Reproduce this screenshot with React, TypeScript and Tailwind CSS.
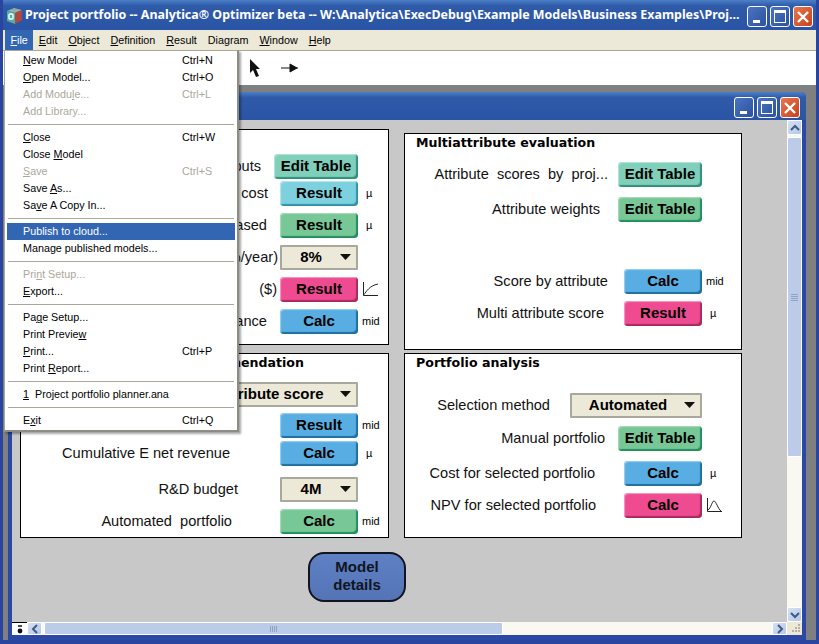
import React from 'react';

const menuItems = [
  ['&New Model', 'Ctrl+N'], ['&Open Model...', 'Ctrl+O'], ['Add Modu&le...', 'Ctrl+L', 'off'], ['Add Library...', '', 'off'], '-',
  ['&Close', 'Ctrl+W'], ['Close &Model', ''], ['&Save', 'Ctrl+S', 'off'], ['Save &As...', ''], ['Sa&ve A Copy In...', ''], '-',
  ['Publish to cloud...', '', 'on'], ['Manage published models...', ''], '-',
  ['Pri&nt Setup...', '', 'off'], ['&Export...', ''], '-',
  ['Pa&ge Setup...', ''], ['Print Previe&w', ''], ['&Print...', 'Ctrl+P'], ['Print &Report...', ''], '-',
  ['&1  Project portfolio planner.ana', ''], '-',
  ['E&xit', 'Ctrl+Q'],
] as const;

const topMenus = ['&File', '&Edit', '&Object', '&Definition', '&Result', 'Dia&gram', '&Window', '&Help'];

const btnColors = {
  teal: 'bg-[#7fcfba] shadow-[inset_1px_1px_1px_#b5e3d8,inset_-2px_-2px_1px_#2f8f7c]',
  cyan: 'bg-[#7dd1de] shadow-[inset_1px_1px_1px_#b8e6ee,inset_-2px_-2px_1px_#2d93a8]',
  green: 'bg-[#78c797] shadow-[inset_1px_1px_1px_#a9dcbc,inset_-2px_-2px_1px_#1f8f5c]',
  blue: 'bg-[#58aee3] shadow-[inset_1px_1px_1px_#9bd0f0,inset_-2px_-2px_1px_#1f6f9f]',
  pink: 'bg-[#ef4b90] shadow-[inset_1px_1px_1px_#f59cc0,inset_-2px_-2px_1px_#a82a60]',
};

// turns "&New" into an underlined mnemonic
const Mnemonic = ({ text }: { text: string }) => {
  const i = text.indexOf('&');
  if (i < 0) return <span className="whitespace-pre">{text}</span>;
  return (
    <span className="whitespace-pre">
      {text.slice(0, i)}<u>{text[i + 1]}</u>{text.slice(i + 2)}
    </span>
  );
};

const WinButtons = ({ className }: { className: string }) => (
  <div className={`flex gap-[3px] ${className}`}>
    <div className="w-[20px] h-[21px] rounded-[3px] border border-white bg-gradient-to-br from-[#4a74c0] to-[#2c52a0] relative">
      <div className="absolute left-[5px] bottom-[3px] w-[7px] h-[3px] bg-white" />
    </div>
    <div className="w-[20px] h-[21px] rounded-[3px] border border-white bg-gradient-to-br from-[#4a74c0] to-[#2c52a0] relative">
      <div className="absolute left-[3px] top-[3px] w-[12px] h-[13px] border border-white border-t-[3px]" />
    </div>
    <div className="w-[20px] h-[21px] rounded-[3px] border border-white bg-gradient-to-br from-[#e8764c] to-[#c8401c] flex items-center justify-center">
      <svg width="14" height="14" viewBox="0 0 14 14"><path d="M2 2 L12 12 M12 2 L2 12" stroke="#fff" strokeWidth="2.4" /></svg>
    </div>
  </div>
);

const Unit = ({ kind }: { kind?: string }) => {
  if (kind === 'mid') return <span className="text-[11px] text-black ml-[4px] font-['Liberation_Sans',sans-serif]">mid</span>;
  if (kind === 'mu') return <span className="text-[11px] text-black ml-[8px] font-['Liberation_Sans',sans-serif]">µ</span>;
  if (kind === 'cdf')
    return (
      <svg className="ml-[5px]" width="15" height="14" viewBox="0 0 15 14" fill="none" stroke="#222">
        <path d="M0.5 0 V13.5 H15" />
        <path d="M0.5 13 C4 9 6 4 15 2" />
      </svg>
    );
  if (kind === 'pdf')
    return (
      <svg className="ml-[5px]" width="15" height="14" viewBox="0 0 15 14" fill="none" stroke="#222">
        <path d="M0.5 0 V13.5 H15" />
        <path d="M1 12 C4 10 5 3 7 3 C9 3 11 11 14 13" />
      </svg>
    );
  return null;
};

const Row = ({ label, labelClass = '', btn, color = 'blue', width = 'w-[78px]', unit, mt = '', dropdown = false, slot }:
  { label: string, labelClass?: string, btn: string, color?: keyof typeof btnColors, width?: string, unit?: string, mt?: string, dropdown?: boolean, slot: string }
) => (
  <div className={`flex items-center justify-end h-[26px] ${mt}`}>
    <span className={`pt-[1px] text-[14.6px] text-[#111] whitespace-pre font-['Liberation_Sans',sans-serif] ${labelClass}`}>{label}</span>
    {dropdown ? (
      <div className={`h-[25px] ${width} bg-[#ece9d8] border-2 border-[#a9a89c] rounded-[1px] flex items-center text-[15px] font-bold text-black font-['Liberation_Sans',sans-serif]`}>
        <span className="flex-1 text-center whitespace-nowrap">{btn}</span>
        <svg className="mr-[5px]" width="11" height="6" viewBox="0 0 11 6"><path d="M0 0 H11 L5.5 6 Z" fill="#111" /></svg>
      </div>
    ) : (
      <div className={`h-[25px] ${width} rounded-[4px] flex items-center justify-center text-[15px] font-bold text-black font-['Liberation_Sans',sans-serif] ${btnColors[color]}`}>
        {btn}
      </div>
    )}
    <div className={`${slot} h-full flex items-center`}><Unit kind={unit} /></div>
  </div>
);

const Heading = ({ text, className = '' }: { text: string, className?: string }) => (
  <div className={`h-[16px] pt-[2px] flex items-center text-[12.6px] font-bold text-black whitespace-nowrap font-['DejaVu_Sans',sans-serif] ${className}`}>{text}</div>
);

const Panel = ({ className, children }: { className: string, children: React.ReactNode }) => (
  <div className={`bg-white border border-black ${className}`}>{children}</div>
);

const ScrollArrow = ({ d, className }: { d: string, className: string }) => (
  <div className={`bg-gradient-to-br from-[#d5e0f3] to-[#b6c8e8] border border-white rounded-[2px] flex items-center justify-center ${className}`}>
    <svg width="10" height="10" viewBox="0 0 10 10" fill="none"><path d={d} stroke="#3f5a86" strokeWidth="2" /></svg>
  </div>
);

export default function App() {
  return (
    <div className="relative w-[819px] h-[644px] overflow-hidden bg-[#808080] flex flex-col border-x-[3px] border-b-[4px] border-[#29459f]">
      {/* main title bar */}
      <div className="-mx-[3px] h-[30px] shrink-0 flex items-center bg-gradient-to-b from-[#4d80c8] via-[#2f5aa8] via-20% to-[#2a55a6] text-white">
        <svg className="ml-[6px] mt-[2px] shrink-0" width="17" height="18" viewBox="0 0 17 18">
          <path d="M1 4 L8 1 L16 3 L9 6 Z" fill="#8fb0a8" />
          <path d="M1 4 L9 6 V17 L1 14 Z" fill="#4fb0a4" />
          <path d="M9 6 L16 3 V13 L9 17 Z" fill="#b0483c" />
          <rect x="3" y="7" width="4" height="5" rx="1" fill="none" stroke="#fff" strokeWidth="1.4" />
        </svg>
        <span className="ml-[2px] text-[12.45px] font-bold whitespace-nowrap font-['Noto_Sans',sans-serif]">
          Project portfolio -- Analytica® Optimizer beta -- W:\Analytica\ExecDebug\Example Models\Business Examples\Proj...
        </span>
        <WinButtons className="absolute right-[3px] top-[6px]" />
      </div>

      {/* menu bar */}
      <div className="-mx-[3px] px-[5px] h-[21px] shrink-0 flex bg-[#ece9d8] border-b border-[#aca899] text-[10.75px] text-black font-['Liberation_Sans',sans-serif]">
        {topMenus.map((m, i) => (
          <div key={m} className={`h-[20px] flex items-center px-[5.5px] ${i === 0 ? 'bg-[#3366b2] text-white' : ''}`}><Mnemonic text={m} /></div>
        ))}
      </div>

      {/* toolbar */}
      <div className="-mx-[3px] h-[34px] shrink-0 bg-white flex items-center pl-[248px] gap-[19px]">
        <svg width="14" height="20" viewBox="0 0 14 20"><path d="M2 1 V15 L5 12 L8 19 L11 18 L8 11 L12 11 Z" fill="#111" /></svg>
        <svg width="18" height="10" viewBox="0 0 18 10"><path d="M0 5 H17 M9 1 L16 5 L9 9 Z" stroke="#111" fill="#111" /></svg>
      </div>

      {/* child window */}
      <div className="mt-[7px] ml-[5px] w-[798px] flex-1 min-h-0 flex flex-col rounded-t-[5px] bg-[#2a48a4] border-x-[4px] border-b-[5px] border-[#2a48a4]">
        <div className="-mx-[4px] h-[28px] shrink-0 rounded-t-[5px] bg-gradient-to-b from-[#4d80c8] via-[#2f5aa8] via-20% to-[#2a55a6]">
          <WinButtons className="absolute right-[16px] top-[97px]" />
        </div>

        <div className="flex-1 min-h-0 flex bg-[#c8c8c8]">
          {/* diagram canvas */}
          <div className="w-[775px] pl-[8px] flex flex-col overflow-hidden">
            <div className="flex gap-[15px] items-start">
              <div className="w-[369px]">
                <Panel className="mt-[9px] h-[216px] pt-[23px]">
                  <Row slot="w-[30px]" label="Project inputs" labelClass="mr-[13px]" btn="Edit Table" color="teal" width="w-[84px]" />
                  <Row slot="w-[30px]" mt="mt-[1px]" label="Project cost" labelClass="mr-[12px]" btn="Result" color="cyan" unit="mu" />
                  <Row slot="w-[30px]" mt="mt-[6px]" label="Projects released" labelClass="mr-[13px]" btn="Result" color="green" unit="mu" />
                  <Row slot="w-[30px]" mt="mt-[6px]" label="Discount rate (%/year)" labelClass="mr-[2px]" btn="8%" dropdown />
                  <Row slot="w-[30px]" mt="mt-[6px]" label="Net present value          ($)" labelClass="mr-[3px]" btn="Result" color="pink" unit="cdf" />
                  <Row slot="w-[30px]" mt="mt-[6px]" label="Cost variance" labelClass="mr-[13px]" btn="Calc" unit="mid" />
                </Panel>
                <Panel className="mt-[8px] h-[185px]">
                  <Heading text="Portfolio recommendation" className="justify-end pr-[84px]" />
                  <Row slot="w-[30px]" mt="mt-[11px]" label="" btn="Multiattribute score" width="w-[192px]" dropdown />
                  <Row slot="w-[30px]" mt="mt-[5px]" label="" btn="Result" unit="mid" />
                  <Row slot="w-[30px]" mt="mt-[2px]" label="Cumulative E net revenue" labelClass="mr-[50px]" btn="Calc" unit="mu" />
                  <Row slot="w-[30px]" mt="mt-[10px]" label="R&D budget" labelClass="mr-[42px]" btn="4M" dropdown />
                  <Row slot="w-[30px]" mt="mt-[6px]" label="Automated  portfolio" labelClass="mr-[48px]" btn="Calc" color="green" unit="mid" />
                </Panel>
              </div>

              <div className="w-[338px]">
                <Panel className="mt-[13px] h-[217px]">
                  <Heading text="Multiattribute evaluation" className="pl-[11px]" />
                  <Row slot="w-[39px]" mt="mt-[11px]" label="Attribute  scores  by  proj..." labelClass="mr-[10px]" btn="Edit Table" color="teal" width="w-[84px]" />
                  <Row slot="w-[39px]" mt="mt-[9px]" label="Attribute weights" labelClass="mr-[18px]" btn="Edit Table" color="green" width="w-[84px]" />
                  <Row slot="w-[39px]" mt="mt-[46px]" label="Score by attribute" labelClass="mr-[16px]" btn="Calc" unit="mid" />
                  <Row slot="w-[39px]" mt="mt-[6px]" label="Multi attribute score" labelClass="mr-[20px]" btn="Result" color="pink" unit="mu" />
                </Panel>
                <Panel className="mt-[3px] h-[185px]">
                  <Heading text="Portfolio analysis" className="pl-[11px]" />
                  <Row slot="w-[39px]" mt="mt-[22px]" label="Selection method" labelClass="mr-[20px]" btn="Automated" width="w-[132px]" dropdown />
                  <Row slot="w-[39px]" mt="mt-[7px]" label="Manual portfolio" labelClass="mr-[13px]" btn="Edit Table" color="green" width="w-[84px]" />
                  <Row slot="w-[39px]" mt="mt-[9px]" label="Cost for selected portfolio" labelClass="mr-[29px]" btn="Calc" unit="mu" />
                  <Row slot="w-[39px]" mt="mt-[6px]" label="NPV for selected portfolio" labelClass="mr-[28px]" btn="Calc" color="pink" unit="pdf" />
                </Panel>
              </div>
            </div>
            <div className="mt-[14px] ml-[288px] w-[98px] h-[50px] pb-[2px] rounded-[16px] border-2 border-[#10151f] bg-gradient-to-b from-[#5f80c4] to-[#5474b6] flex items-center justify-center text-center text-[15px] leading-[18px] font-bold text-[#10151f] font-['Liberation_Sans',sans-serif]">
              Model<br />details
            </div>
          </div>

          {/* vertical scrollbar */}
          <div className="w-[15px] flex flex-col bg-[#f9f8f1]">
            <ScrollArrow d="M1 7 L5 3 L9 7" className="h-[15px]" />
            <div className="mt-[2px] h-[320px] bg-[#bccbe8] border border-white rounded-[2px] flex flex-col items-center justify-center gap-[1px]">
              <div className="w-[7px] h-px bg-[#8ea3c8]" /><div className="w-[7px] h-px bg-[#8ea3c8]" /><div className="w-[7px] h-px bg-[#8ea3c8]" /><div className="w-[7px] h-px bg-[#8ea3c8]" />
            </div>
            <div className="flex-1" />
            <ScrollArrow d="M1 3 L5 7 L9 3" className="h-[15px]" />
          </div>
        </div>

        {/* horizontal scrollbar */}
        <div className="h-[13px] shrink-0 flex bg-[#f9f8f1]">
          <div className="w-[15px] bg-white flex items-center justify-center border-t border-black">
            <svg width="6" height="9" viewBox="0 0 6 9"><circle cx="3" cy="6" r="2.4" fill="#111" /><path d="M1 1 H5" stroke="#111" strokeWidth="1.5" /></svg>
          </div>
          <ScrollArrow d="M7 1 L3 5 L7 9" className="w-[15px]" />
          <div className="ml-[2px] w-[459px] bg-[#bccbe8] border border-white rounded-[2px] flex items-center justify-center gap-[1px]">
            <div className="w-px h-[6px] bg-[#8ea3c8]" /><div className="w-px h-[6px] bg-[#8ea3c8]" /><div className="w-px h-[6px] bg-[#8ea3c8]" /><div className="w-px h-[6px] bg-[#8ea3c8]" />
          </div>
          <div className="flex-1" />
          <ScrollArrow d="M3 1 L7 5 L3 9" className="w-[15px]" />
          <div className="w-[15px] bg-[#ece9d8] flex items-end justify-end p-[1px]">
            <svg width="11" height="11" viewBox="0 0 11 11" fill="#b5b19e"><rect x="8" y="1" width="2" height="2" /><rect x="5" y="4" width="2" height="2" /><rect x="8" y="4" width="2" height="2" /><rect x="2" y="7" width="2" height="2" /><rect x="5" y="7" width="2" height="2" /><rect x="8" y="7" width="2" height="2" /></svg>
          </div>
        </div>
      </div>

      {/* open File menu */}
      <div className="absolute left-[1px] top-[50px] w-[235px] h-[382px] bg-white border border-[#aca899] border-r-2 border-b-2 border-r-[#8c8c84] border-b-[#8c8c84] shadow-[2px_2px_2px_rgba(0,0,0,0.35)] px-[2px] pt-[1px] text-[10.75px] font-['Liberation_Sans',sans-serif]">
        {menuItems.map((item, i) => {
          if (item === '-') return <div key={i} className="h-[9px] flex items-center px-[1px]"><div className="w-full h-px bg-[#aca899]" /></div>;
          const [label, shortcut, state] = item as readonly [string, string, string?];
          const tone = state === 'off' ? 'text-[#aca899]' : state === 'on' ? 'bg-[#3366b2] text-white' : 'text-black';
          return (
            <div key={i} className={`h-[17px] flex items-center ${tone}`}>
              <div className="ml-[16px] w-[159px]"><Mnemonic text={label} /></div>
              <span>{shortcut}</span>
            </div>
          );
        })}
      </div>
    </div>
  );
}
